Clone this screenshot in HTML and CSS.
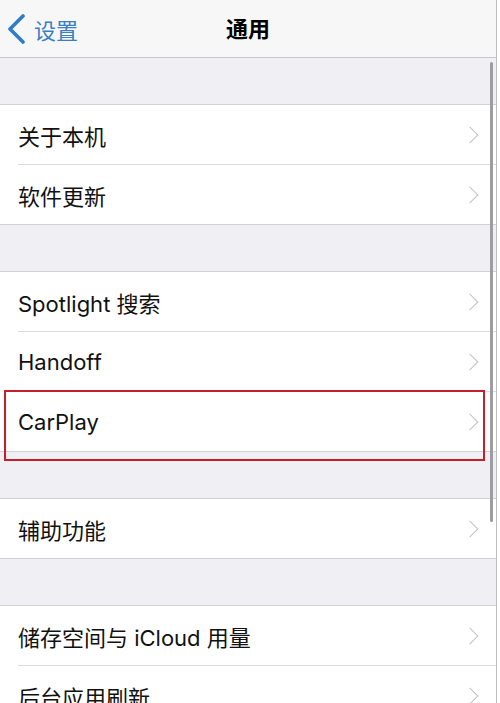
FILE: index.html
```html
<!DOCTYPE html>
<html lang="zh-CN">
<head>
  <meta charset="UTF-8" />
  <meta name="viewport" content="width=device-width, initial-scale=1" />
  <title>通用</title>
  <link rel="stylesheet" href="styles.css">
</head>
<body>

<div class="screen">
  <div class="navbar">
    <div class="back">
      <svg class="back-icon" width="20" height="30" viewBox="0 0 20 30">
        <polyline points="16,2 3,15 16,28" fill="none" stroke="#2f7cc9" stroke-width="3.6" stroke-linecap="round" stroke-linejoin="round"/>
      </svg>
      <span>设置</span>
    </div>
    <div class="title">通用</div>
  </div>

  <div class="gap"></div>
  <div class="group">
    <div class="row"><div class="cell"><span>关于本机</span><i class="chev"></i></div></div>
    <div class="row"><div class="cell"><span>软件更新</span><i class="chev"></i></div></div>
  </div>

  <div class="gap"></div>
  <div class="group">
    <div class="row"><div class="cell"><span>Spotlight 搜索</span><i class="chev"></i></div></div>
    <div class="row"><div class="cell"><span>Handoff</span><i class="chev"></i></div></div>
    <div class="row"><div class="cell"><span>CarPlay</span><i class="chev"></i></div></div>
  </div>

  <div class="gap"></div>
  <div class="group">
    <div class="row"><div class="cell"><span>辅助功能</span><i class="chev"></i></div></div>
  </div>

  <div class="gap"></div>
  <div class="group">
    <div class="row"><div class="cell"><span>储存空间与 iCloud 用量</span><i class="chev"></i></div></div>
    <div class="row"><div class="cell"><span>后台应用刷新</span><i class="chev"></i></div></div>
  </div>

  <!-- annotation + scroll indicator sit over the list -->
  <div class="highlight"></div>
  <div class="scrollbar"></div>
</div>

</body>
</html>
```

FILE: styles.css
```css
body {
  margin: 0;
  background: #fff;
  font-family: Inter, "Noto Sans CJK SC", sans-serif;
  color: #111;
  overflow: hidden;
}
.screen {
  position: relative;
  width: 496px;
  height: 703px;
  overflow: hidden;
  background: #efeff4;
  border-right: 1px solid #bdbdc1;
}
.navbar {
  height: 58px;
  box-sizing: border-box;
  background: #f7f7f8;
  border-bottom: 1px solid #c8c7cc;
  display: flex;
  align-items: center;
  justify-content: center;
  padding-bottom: 3px;
  position: relative;
}
.back {
  position: absolute;
  left: 7px;
  top: 13px;
  display: flex;
  align-items: center;
  gap: 7px;
  color: #3a7fc4;
  font-size: 22px;
}
.title {
  font-size: 22px;
  font-weight: 600;
  color: #000;
}
.gap {
  height: 46px;
}
.group {
  background: #fff;
  border-top: 1px solid #d0d0d5;
  border-bottom: 1px solid #d0d0d5;
}
.row {
  padding-left: 18px;
}
.cell {
  height: 59px;
  display: flex;
  align-items: center;
  justify-content: space-between;
  padding-right: 20px;
  font-size: 22px;
  border-bottom: 1px solid #dcdce0;
}
.row:last-child .cell {
  border-bottom: none;
}
.chev {
  width: 11px;
  height: 11px;
  border-right: 1.8px solid #c4c4c9;
  border-top: 1.8px solid #c4c4c9;
  transform: rotate(45deg);
}
.highlight {
  position: absolute;
  left: 4px;
  top: 390px;
  width: 477px;
  height: 67px;
  border: 2px solid #c41f2b;
}
.scrollbar {
  position: absolute;
  left: 490px;
  top: 62px;
  width: 3px;
  height: 460px;
  border-radius: 2px;
  background: #9c9ca1;
}
```
